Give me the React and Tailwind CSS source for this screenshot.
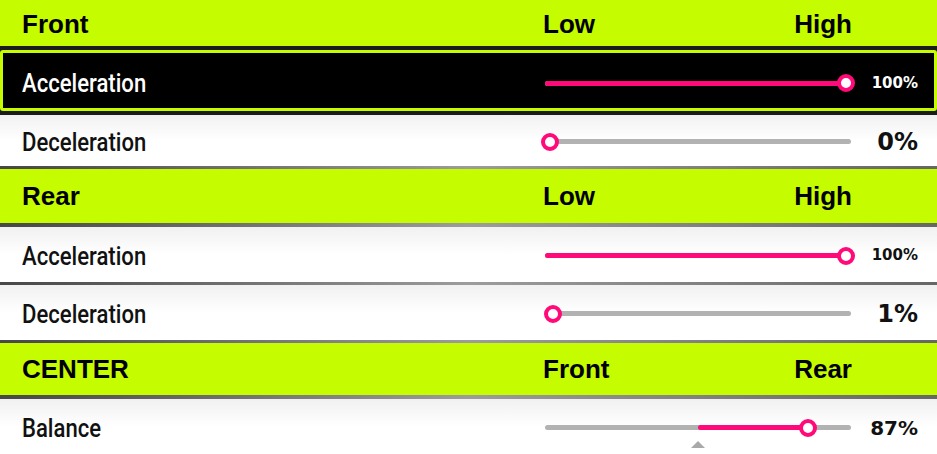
import React from "react";

const LIME = "bg-[#c6fc00]";

const Separator = ({ thick = false }) => (
  <div
    className={`${thick ? "h-[4px]" : "h-[3px]"} bg-gradient-to-r from-[#474747] via-[#9c9c9c] to-[#666]`}
  />
);

const Header = ({ title, low, high, className = "" }) => (
  <div
    className={`${LIME} ${className} grid grid-cols-[1fr_309px_66px] items-center pl-[22px] pr-[19px] font-['Liberation_Sans',Arial,sans-serif] text-[26px] font-bold text-black`}
  >
    <span>{title}</span>
    <div className="flex justify-between">
      <span>{low}</span>
      <span>{high}</span>
    </div>
    <span />
  </div>
);

const Slider = ({ value, from = 0 }) => {
  const pos = (v) => 5 + v * 2.96;
  const start = from === 0 ? 0 : pos(from);
  return (
    <div className="relative h-[5px] w-[306px] rounded-full bg-[#b2b2b2]">
      <div
        className="absolute top-0 h-[5px] rounded-l-full bg-[#ff0a78]"
        style={{ left: start, width: pos(value) - start }}
      />
      <div
        className="absolute top-1/2 h-[18px] w-[18px] -translate-x-1/2 -translate-y-1/2 rounded-full border-[4px] border-[#ff0a78] bg-white"
        style={{ left: pos(value) }}
      />
      {from !== 0 && (
        <div
          className="absolute top-[16px] h-0 w-0 -translate-x-1/2 border-x-[7px] border-b-[7px] border-x-transparent border-b-[#a9a9a9]"
          style={{ left: pos(from) }}
        />
      )}
    </div>
  );
};

const Row = ({ label, value, slider, small = false, size = "text-[24px]", dark = false, className = "" }) => (
  <div
    className={`${className} grid grid-cols-[1fr_306px_67px] items-center ${
      dark
        ? "bg-black pl-[19px] pr-[16px] pt-[5px] text-white"
        : "bg-gradient-to-b from-[#f1f1f1] via-white to-white pl-[22px] pr-[19px] pt-[2px] text-[#111]"
    }`}
  >
    <span className="font-['Roboto',sans-serif] text-[26px] font-medium leading-none">
      <span className="inline-block origin-left scale-x-[0.85]">{label}</span>
    </span>
    {slider}
    <span
      className={`text-right font-['DejaVu_Sans',sans-serif] font-bold leading-none ${
        small ? "text-[15px]" : size
      }`}
    >
      {value}
    </span>
  </div>
);

export default function App() {
  return (
    <div className="h-[454px] w-[937px] overflow-hidden bg-white">
      <Header title="Front" low="Low" high="High" className="h-[46px] pt-[3px]" />

      <div className="bg-[#1b1b1b] py-[4px]">
        <div className="rounded-[3px] border-[3px] border-[#c6fc00]">
          <Row
            label="Acceleration"
            value="100%"
            small
            dark
            className="h-[55px]"
            slider={<Slider value={100} />}
          />
        </div>
      </div>

      <Row label="Deceleration" value="0%" className="h-[51px]" slider={<Slider value={0} />} />
      <Separator />

      <Header title="Rear" low="Low" high="High" className="h-[54px] pt-[1px]" />
      <Separator thick />

      <Row label="Acceleration" value="100%" small className="h-[55px]" slider={<Slider value={100} />} />
      <Separator />
      <Row label="Deceleration" value="1%" className="h-[55px]" slider={<Slider value={1} />} />
      <Separator />

      <Header title="CENTER" low="Front" high="Rear" className="h-[52px] pt-[1px]" />
      <Separator thick />

      <Row
        label="Balance"
        value="87%"
        size="text-[20px]"
        className="h-[55px]"
        slider={<Slider value={87} from={50} />}
      />
    </div>
  );
}
